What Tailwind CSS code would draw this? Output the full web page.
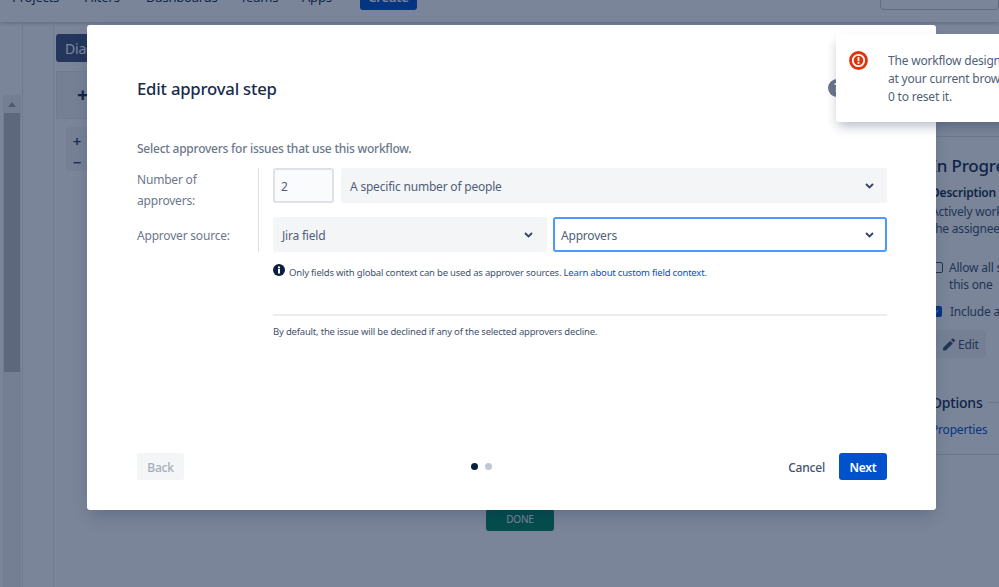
<!DOCTYPE html>
<html lang="en">

<head>
  <meta charset="UTF-8">
  <title>Edit approval step</title>
  <script src="https://cdn.jsdelivr.net/npm/@tailwindcss/browser@4"></script>
</head>

<body class="relative h-[587px] w-[999px] overflow-hidden bg-white font-['Noto_Sans',sans-serif] text-[12px] tracking-[-0.2px] text-[#172b4d]">

  <!-- Page behind the dialog -->
  <div class="flex h-[22px] items-end overflow-hidden pb-[12px] pl-[12px] text-[13px] leading-[20px] shadow-[0_2px_3px_rgba(9,30,66,0.2)]">
    <span class="mb-[3px] w-[72px] shrink-0">Projects</span>
    <span class="mb-[3px] w-[62px] shrink-0">Filters</span>
    <span class="mb-[3px] w-[94px] shrink-0">Dashboards</span>
    <span class="mb-[3px] w-[62px] shrink-0">Teams</span>
    <span class="mb-[3px] w-[58px] shrink-0">Apps</span>
    <span class="flex h-[26px] w-[57px] shrink-0 items-center justify-center rounded-[3px] bg-[#0052cc] font-semibold text-white">Create</span>
    <div class="ml-auto flex h-[30px] w-[119px] shrink-0 items-end gap-[6px] rounded-[4px] border border-[#c1c7d0] pb-[6px] pl-[12px] text-[#42526e]">
      <svg class="mb-[4px]" width="12" height="12" viewBox="0 0 12 12" fill="none" stroke="#344563" stroke-width="1.6"><circle cx="5" cy="5" r="3.8" /><path d="M8 8l3 3" /></svg>
      <span>Search</span>
    </div>
  </div>

  <div class="flex h-[565px]">
    <div class="w-[23px] shrink-0 border-r border-[#ebecf0] pl-[3px] pt-[73px]">
      <div class="h-full w-[18px] bg-[#f1f1f1]">
        <div class="flex h-[18px] items-center justify-center">
          <span class="h-0 w-0 border-x-[4px] border-b-[5px] border-x-transparent border-b-[#a3a3a3]"></span>
        </div>
        <div class="ml-[1px] h-[259px] w-[16px] bg-[#c1c1c1]"></div>
      </div>
    </div>
    <div class="w-[31px] shrink-0 border-r border-[#ebecf0]"></div>
    <div class="flex-1 pl-[2px] pt-[12px]">
      <div class="flex h-[28px] w-[60px] items-center rounded-[3px] bg-[#44537a] pl-[9px] text-[14px] text-white">Diagram</div>
      <div class="mt-[9px] flex h-[48px] w-[300px] items-center border border-[#ebecf0] bg-[#f4f5f7] pl-[20px] text-[20px] font-bold">+</div>
      <div class="ml-[10px] mt-[8px] flex h-[44px] w-[30px] flex-col items-center rounded-[3px] bg-[#f4f5f7] pr-[8px] pt-[4px] text-[15px] font-semibold leading-[21px] text-[#344563]">
        <span>+</span>
        <span>−</span>
      </div>
      <div class="ml-[430px] mt-[338px] flex h-[22px] w-[68px] items-center justify-center rounded-[3px] bg-[#00875a] pb-[1px] text-[10px] text-white">DONE</div>
    </div>
  </div>

  <!-- Right side panel, mostly under the dialog -->
  <div class="absolute left-[921px] top-[136px] h-[319px] w-[200px] border-y border-[#dfe1e6] pl-[10px] text-[#42526e]">
    <div class="mt-[17px] text-[17px] font-medium leading-[24px] text-[#172b4d]">In Progress</div>
    <div class="mt-[7px] font-semibold leading-[16px] text-[#172b4d]">Description</div>
    <div class="mt-[2px] leading-[17px]">Actively working</div>
    <div class="leading-[17px]">the assignee</div>
    <div class="mt-[22px] flex gap-[6px] leading-[17px]">
      <span class="mt-[3px] h-[11px] w-[12px] shrink-0 rounded-[2px] border border-[#42526e]"></span>
      <span>Allow all statuses<br>this one</span>
    </div>
    <div class="mt-[10px] flex gap-[8px] leading-[17px]">
      <span class="mt-[3px] flex h-[11px] w-[11px] shrink-0 items-center justify-center rounded-[2px] bg-[#0052cc] text-[8px] leading-none text-white">✓</span>
      <span>Include all</span>
    </div>
    <div class="mt-[10px] flex h-[28px] w-[55px] items-center gap-[3px] rounded-[3px] bg-[#f4f5f7] pl-[11px] pt-[1px]">
      <svg width="13" height="13" viewBox="0 0 12 12" fill="#42526e"><path d="M1 9l6.5-6.5 2.5 2.5L3.500 11.500H1zM8.300 1.700l1-1a1 1 0 0 1 1.400 0l1 1a1 1 0 0 1 0 1.400l-1 1z" /></svg>
      <span>Edit</span>
    </div>
    <div class="mt-[34px] flex h-[20px] items-center gap-[4px] text-[14px] font-medium text-[#172b4d]">
      <span>Options</span>
      <span class="h-px flex-1 bg-[#dfe1e6]"></span>
    </div>
    <div class="mt-[9px] leading-[18px] text-[#0052cc]">Properties</div>
  </div>

  <!-- Overlay -->
  <div class="absolute inset-0 bg-[#091e42]/[.54]"></div>

  <!-- Dialog -->
  <div class="absolute left-[87px] top-[25px] flex h-[485px] w-[849px] flex-col rounded-[3px] bg-white pb-[30px] pl-[50px] pr-[49px] pt-[52px] shadow-[0_8px_16px_-4px_rgba(9,30,66,0.25)]">
    <div class="flex h-[24px] items-center justify-between pr-[41px]">
      <h1 class="text-[16.700px] font-medium text-[#172b4d]">Edit approval step</h1>
      <span class="flex h-[18px] w-[18px] -translate-y-[1px] items-center justify-center rounded-full bg-[#6b778c] text-[13px] font-bold text-white">?</span>
    </div>

    <p class="mt-[39px] h-[18px] font-medium leading-[18px] tracking-[-0.24px] text-[#6b778c]">Select approvers for issues that use this workflow.</p>

    <div class="mt-[10px] flex">
      <div class="w-[122px] shrink-0 border-r border-[#dfe1e6] pt-[1px] text-[#6b778c]">
        <div class="leading-[21px]">Number of<br>approvers:</div>
        <div class="mt-[13px] h-[27px] leading-[24px]">Approver source:</div>
      </div>
      <div class="flex-1 pl-[14px] text-[#505f79]">
        <div class="flex h-[35px] gap-[7px]">
          <div class="flex w-[61px] items-center rounded-[3px] border-2 border-[#dfe1e6] bg-[#fafbfc] pl-[6px] pt-[2px]">2</div>
          <div class="flex flex-1 items-center justify-between rounded-[3px] bg-[#f4f5f7] pl-[9px] pr-[13px] pt-[2px]">
            <span>A specific number of people</span>
            <svg class="mb-[1px]" width="9" height="6" viewBox="0 0 9 6" fill="none" stroke="#344563" stroke-width="1.800"><path d="M1 1l3.500 3.500L8 1" /></svg>
          </div>
        </div>
        <div class="mt-[14px] flex h-[35px] gap-[6px]">
          <div class="flex w-[274px] items-center justify-between rounded-[3px] bg-[#f4f5f7] pl-[9px] pr-[14px] pt-[2px]">
            <span>Jira field</span>
            <svg class="mb-[1px]" width="9" height="6" viewBox="0 0 9 6" fill="none" stroke="#344563" stroke-width="1.800"><path d="M1 1l3.500 3.500L8 1" /></svg>
          </div>
          <div class="flex flex-1 items-center justify-between rounded-[3px] border-2 border-[#4c9aff] bg-white pl-[6px] pr-[11px] pt-[2px]">
            <span>Approvers</span>
            <svg class="mb-[1px]" width="9" height="6" viewBox="0 0 9 6" fill="none" stroke="#344563" stroke-width="1.800"><path d="M1 1l3.500 3.500L8 1" /></svg>
          </div>
        </div>
      </div>
    </div>

    <div class="ml-[136px] mt-[12px] flex items-center gap-[4px] text-[9.500px] leading-[16px] tracking-[-0.2px] text-[#42526e]">
      <svg class="mb-[5px] shrink-0" width="12" height="12" viewBox="0 0 12 12"><circle cx="6" cy="6" r="6" fill="#091e42" /><rect x="5" y="5" width="2" height="4.500" fill="#fff" /><rect x="5" y="2.500" width="2" height="1.800" fill="#fff" /></svg>
      <span>Only fields with global context can be used as approver sources. <span class="text-[#0052cc]">Learn about custom field context.</span></span>
    </div>

    <div class="ml-[136px] mt-[33px] border-t-2 border-[#ebecf0] pt-[8px] text-[9.500px] leading-[16px] tracking-[-0.2px] text-[#42526e]">By default, the issue will be declined if any of the selected approvers decline.</div>

    <div class="mt-auto flex h-[27px] items-center justify-between">
      <div class="flex h-[27px] w-[47px] items-center justify-center rounded-[3px] bg-[#f4f5f7] pt-[2px] font-medium text-[#a5adba]">Back</div>
      <div class="flex gap-[7px] pr-[10px]">
        <span class="h-[7px] w-[7px] rounded-full bg-[#091e42]"></span>
        <span class="h-[7px] w-[7px] rounded-full bg-[#c1c7d0]"></span>
      </div>
      <div class="flex items-center gap-[14px]">
        <span class="pt-[2px] font-medium text-[#42526e]">Cancel</span>
        <span class="flex h-[27px] w-[48px] items-center justify-center rounded-[3px] bg-[#0052cc] pt-[2px] font-semibold text-white">Next</span>
      </div>
    </div>
  </div>

  <!-- Flag message -->
  <div class="absolute left-[836px] top-[34px] flex h-[88px] w-[400px] rounded-[3px] bg-white pl-[13px] pt-[17px] shadow-[0_6px_12px_-2px_rgba(9,30,66,0.3)]">
    <svg class="shrink-0" width="19" height="19" viewBox="0 0 19 19"><circle cx="9.500" cy="9.500" r="8" fill="none" stroke="#de350b" stroke-width="2.800" /><circle cx="9.500" cy="9.500" r="4.800" fill="#de350b" /><rect x="8.600" y="6" width="1.800" height="4.200" fill="#fff" /><rect x="8.600" y="11" width="1.800" height="1.800" fill="#fff" /></svg>
    <p class="ml-[20px] pt-[1px] leading-[18px] text-[#505f79]">The workflow designer is not displayed correctly<br>at your current browser zoom level. Press Ctrl +<br>0 to reset it.</p>
  </div>
</body>

</html>
